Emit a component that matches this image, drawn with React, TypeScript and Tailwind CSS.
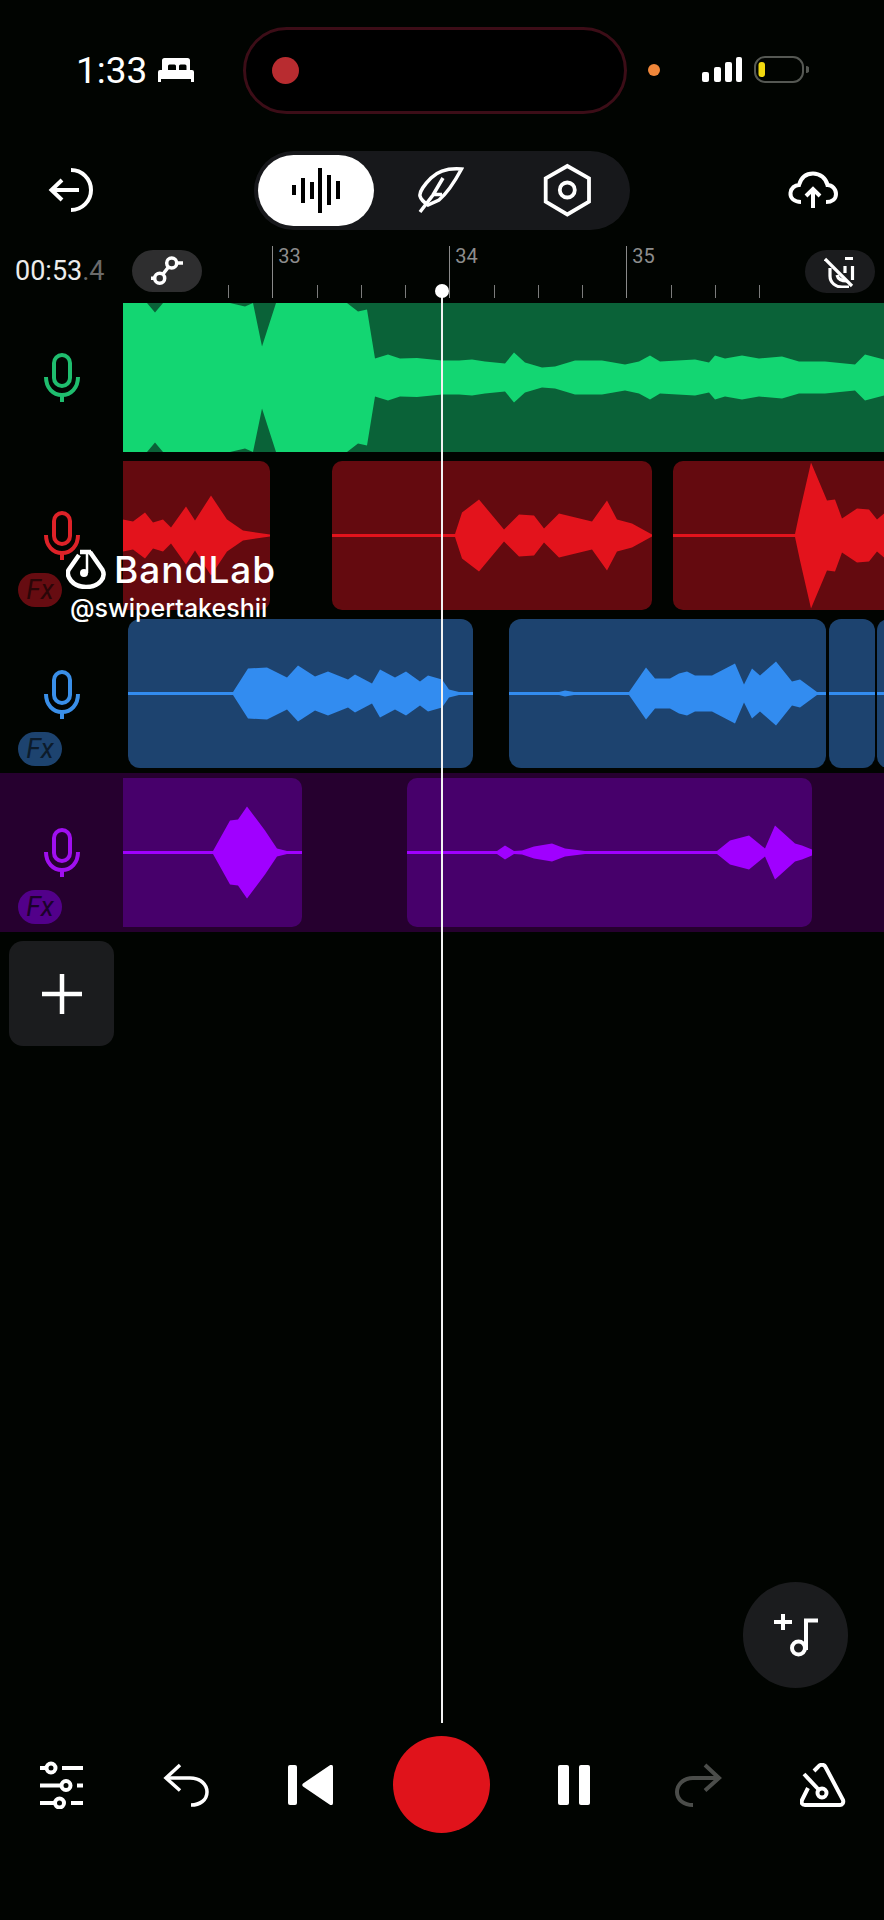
import React from 'react';

type Env = [number, number][];

// envelope points are [page x, half height], mirrored around the clip's middle
const Wave = ({ env, x0, w, fill }: { env: Env; x0: number; w: number; fill: string }) => {
    const top = env.map(([x, h]) => `${x},${74.5 - h}`);
    const bottom = [...env].reverse().map(([x, h]) => `${x},${74.5 + h}`);
    return (
        <svg className="block h-[149px] shrink-0" width={w} viewBox={`${x0} 0 ${w} 149`}>
            <polygon points={[...top, ...bottom].join(' ')} fill={fill} />
        </svg>
    );
};

const Mic = ({ color }: { color: string }) => (
    <svg className="block w-[36px] h-[49px]" viewBox="0 0 36 49" fill="none" stroke={color} strokeWidth="4">
        <rect x="10" y="2" width="16" height="31" rx="8" />
        <path d="M2 24C2 35 9 42 18 42C27 42 34 35 34 24" />
        <path d="M18 42V49" />
    </svg>
);

const Fx = ({ bg, fg }: { bg: string; fg: string }) => (
    <div className={`w-[44px] h-[34px] -ml-[26px] mt-[13px] rounded-full flex items-center justify-center italic text-[27px] leading-none font-['Roboto',sans-serif] ${bg} ${fg}`}>
        Fx
    </div>
);

const greenEnv: Env = [[123, 74.5], [147, 74.5], [155, 65], [163, 74.5], [230, 74.5], [245, 71], [253, 74.5], [262, 31], [276, 74.5], [347, 74.5], [358, 66], [367, 68], [375, 19], [388, 23], [400, 19], [417, 19.5], [442, 17], [459, 17], [472, 18], [485, 16], [505, 14], [514, 25], [525, 15], [542, 10], [555, 11], [575, 17], [602, 17], [625, 13], [639, 16], [650, 22], [660, 16], [695, 18], [709, 15], [715, 22], [725, 19], [742, 22], [759, 19], [782, 21], [799, 16], [825, 16], [855, 13], [865, 23], [884, 18]];
const red1: Env = [[123, 16], [133, 14], [145, 23], [153, 13], [163, 16], [171, 8], [186, 29], [195, 15], [211, 40], [227, 16], [243, 5], [270, 1]];
const red2: Env = [[332, 1.5], [455, 1.5], [462, 23], [479, 36], [504, 6], [519, 21], [534, 20], [544, 7], [559, 22], [592, 14], [607, 35], [617, 16], [632, 12], [652, 1]];
const red3: Env = [[673, 1.5], [795, 1.5], [800, 25], [811, 73], [827, 35], [835, 36], [842, 17], [857, 27], [869, 26], [877, 16], [884, 22]];
const blue1: Env = [[128, 1.5], [233, 1.5], [248, 25], [267, 26], [287, 16], [298, 28], [315, 17], [328, 22], [348, 14], [355, 19], [372, 10], [380, 24], [395, 16], [406, 22], [420, 12], [428, 18], [442, 14], [449, 4], [459, 1.5], [473, 1.5]];
const blue2: Env = [[509, 1.5], [559, 1.5], [565, 3], [574, 1.5], [629, 1.5], [646, 26], [655, 15], [670, 15], [679, 20], [687, 22], [695, 18], [712, 18], [735, 30], [744, 9], [752, 25], [760, 18], [776, 32], [792, 12], [800, 14], [817, 1.5], [826, 1.5]];
const blue3: Env = [[829, 1.5], [875, 1.5]];
const blue4: Env = [[877, 1.5], [900, 1.5]];
const purple1: Env = [[123, 1.5], [213, 1.5], [230, 32], [238, 33], [247, 46], [265, 22], [277, 4], [287, 1.5], [302, 1.5]];
const purple2: Env = [[407, 1.5], [497, 1.5], [505, 7], [514, 1.5], [522, 2], [534, 6], [552, 9], [565, 4], [585, 1.5], [717, 1.5], [730, 12], [749, 17], [765, 4], [775, 27], [795, 9], [802, 7], [812, 3]];

const Tick = ({ label }: { label?: string }) =>
    label ? (
        <div className="w-[44.25px] h-[52px] shrink-0 border-l border-[#8a8a8a] pl-[5px] text-[20px] leading-[20px] text-[#8d8d8d] font-['Roboto',sans-serif]">
            {label}
        </div>
    ) : (
        <div className="w-[44.25px] h-[13px] shrink-0 border-l border-[#7c7c7c]" />
    );

export default function App() {
    return (
        <div className="relative w-[884px] h-[1920px] overflow-hidden bg-[#010401] flex flex-col font-['Roboto',sans-serif] text-white">
            {/* status bar */}
            <div className="h-[140px] shrink-0 flex items-center">
                <span className="ml-[76px] w-[72px] text-[37px] leading-none font-['Roboto',sans-serif]">1:33</span>
                <svg className="ml-[10px] w-[36px] h-[24px]" viewBox="158 60 36 24" fill="#fff">
                    <path d="M162 62.5a2.5 2.5 0 0 1 2.5-2.500h23a2.5 2.5 0 0 1 2.5 2.500V72h-3.500v-4a1.500 1.500 0 0 0-1.500-1.500h-4.500a1.500 1.500 0 0 0-1.500 1.500V72h-3v-4a1.500 1.500 0 0 0-1.500-1.500h-5a1.500 1.500 0 0 0-1.500 1.500V72H162z" />
                    <path d="M158 74a2 2 0 0 1 2-2h32a2 2 0 0 1 2 2v10h-3v-3h-30v3h-3z" />
                </svg>
                <div className="ml-[49px] w-[384px] h-[87px] rounded-full border-[3px] border-[#3c0d17] bg-black flex items-center pl-[26px]">
                    <div className="w-[27px] h-[27px] rounded-full bg-[#b82c30]" />
                </div>
                <div className="ml-[21px] w-[12px] h-[12px] rounded-full bg-[#f0873a]" />
                <svg className="ml-[42px] w-[40px] h-[26px]" viewBox="702 58 40 26" fill="#fff">
                    <rect x="702" y="73" width="7" height="10" rx="2" />
                    <rect x="714" y="68" width="7" height="15" rx="2" />
                    <rect x="725" y="63" width="7" height="20" rx="2" />
                    <rect x="736" y="58" width="6" height="25" rx="2" />
                </svg>
                <svg className="ml-[11px] w-[56px] h-[30px]" viewBox="753 56 56 30" fill="none">
                    <rect x="755" y="58" width="48" height="25" rx="10" stroke="#555853" strokeWidth="2" />
                    <rect x="758.5" y="63" width="6.5" height="15" rx="3" fill="#f2d90f" />
                    <path d="M806 67a3.5 3.5 0 0 1 0 7z" fill="#555853" />
                </svg>
            </div>

            {/* toolbar */}
            <div className="h-[100px] shrink-0 flex items-center">
                <svg className="ml-[48px] w-[47px] h-[48px]" viewBox="48 166 47 48" fill="none" stroke="#fff" strokeWidth="4">
                    <path d="M79 190H52M62 180L51.500 190L62 200" />
                    <path d="M71 170A20 20 0 0 1 71 210" />
                </svg>
                <div className="ml-[159px] w-[376px] h-[79px] rounded-full bg-[#17181b] flex items-center pl-[4px]">
                    <div className="w-[116px] h-[71px] rounded-full bg-white flex items-center justify-center">
                        <svg className="w-[48px] h-[48px]" viewBox="292 166 48 48" fill="#000">
                            <rect x="292" y="185" width="4" height="10" />
                            <rect x="301" y="178" width="4" height="25" />
                            <rect x="310" y="182" width="4" height="17" />
                            <rect x="318" y="168" width="4" height="45" />
                            <rect x="327" y="175" width="4" height="30" />
                            <rect x="336" y="181" width="4" height="18" />
                        </svg>
                    </div>
                    <svg className="ml-[44px] w-[46px] h-[48px]" viewBox="420 166 46 48" fill="none" stroke="#fff" strokeWidth="3.500">
                        <path d="M463.500 169C451 168 440 171 433 178C427 184 421 192 422 196C423 200 427 203 430 205L441 200C448 194 456 183 463.500 169Z" />
                        <path d="M445 178L435 195L422 212M435 194.500H444" />
                    </svg>
                    <svg className="ml-[78px] w-[50px] h-[54px]" viewBox="543 163 50 54" fill="none" stroke="#fff" strokeWidth="3.800">
                        <path d="M568.300 166L590 178.300V201.700L568.300 214.500L546.700 201.700V178.300Z" />
                        <circle cx="568.300" cy="190" r="7.500" />
                    </svg>
                </div>
                <svg className="ml-[158px] w-[50px] h-[40px]" viewBox="788 169 50 40" fill="none" stroke="#fff" strokeWidth="4">
                    <path d="M801 201C794 201 790 197 790.500 192C791 187 795 184 799 184C801 177 806 172.500 813 172.500C820 172.500 826 177 827.500 184C832 184 836 188 836 193C836 198 832 201 826 201" />
                    <path d="M813 207V188M806 195L813 188L820 195" />
                </svg>
            </div>

            {/* timeline */}
            <div className="h-[63px] shrink-0 flex">
                <div className="w-[132px] shrink-0 pl-[15px] pt-[17px] text-[27px] leading-[28px] text-[#ececec]">
                    00:53<span className="text-[#6a6a6a]">.4</span>
                </div>
                <div className="mt-[10px] w-[70px] h-[42px] shrink-0 rounded-full bg-[#2e2e2f] flex items-center justify-center">
                    <svg className="w-[36px] h-[30px]" viewBox="150 257 36 30" fill="none" stroke="#fff" strokeWidth="3.500">
                        <circle cx="172.700" cy="264" r="5" />
                        <circle cx="160.700" cy="279.300" r="5" />
                        <path d="M169.500 268L164 275M178 264H184M152 279.300H156" />
                    </svg>
                </div>
                <div className="ml-[26px] self-end mb-[5px] flex items-end">
                    <Tick />
                    <Tick label="33" />
                    <Tick />
                    <Tick />
                    <Tick />
                    <Tick label="34" />
                    <Tick />
                    <Tick />
                    <Tick />
                    <Tick label="35" />
                    <Tick />
                    <Tick />
                    <Tick />
                </div>
                <div className="mt-[10px] ml-[2px] w-[70px] h-[43px] shrink-0 rounded-full bg-[#1b1c1e] flex items-center justify-center">
                    <svg className="w-[32px] h-[32px]" viewBox="824 256 32 32" fill="none" stroke="#fff" strokeWidth="3.200">
                        <path d="M825 259L852 286" />
                        <path d="M830 268V276C830 283 836 287 842 287H849" />
                        <path d="M837 275C838 279 842 281 847 281" />
                        <path d="M852.500 266V280M845 266V273M845 258.500H853" />
                    </svg>
                </div>
            </div>

            {/* green track */}
            <div className="h-[149px] shrink-0 flex overflow-hidden">
                <div className="w-[123px] shrink-0 pt-[50px] pl-[44px]">
                    <Mic color="#1fbd6e" />
                </div>
                <div className="w-[761px] shrink-0 bg-[#0a6238]">
                    <Wave env={greenEnv} x0={123} w={761} fill="#13d672" />
                </div>
            </div>

            {/* red track */}
            <div className="mt-[9px] h-[149px] shrink-0 flex overflow-hidden">
                <div className="w-[123px] shrink-0 pt-[50px] pl-[44px]">
                    <Mic color="#dd2228" />
                    <Fx bg="bg-[#660c11]" fg="text-[#2a0608]" />
                </div>
                <div className="w-[147px] shrink-0 rounded-r-[10px] overflow-hidden bg-[#640a0f]">
                    <Wave env={red1} x0={123} w={147} fill="#e3131c" />
                </div>
                <div className="ml-[62px] w-[320px] shrink-0 rounded-[10px] overflow-hidden bg-[#640a0f]">
                    <Wave env={red2} x0={332} w={320} fill="#e3131c" />
                </div>
                <div className="ml-[21px] w-[230px] shrink-0 rounded-[10px] overflow-hidden bg-[#640a0f]">
                    <Wave env={red3} x0={673} w={230} fill="#e3131c" />
                </div>
            </div>

            {/* blue track */}
            <div className="mt-[9px] h-[149px] shrink-0 flex overflow-hidden">
                <div className="w-[128px] shrink-0 pt-[51px] pl-[44px]">
                    <Mic color="#3a8fe8" />
                    <Fx bg="bg-[#1d436f]" fg="text-[#0c1b2b]" />
                </div>
                <div className="w-[345px] shrink-0 rounded-[12px] overflow-hidden bg-[#1d436f]">
                    <Wave env={blue1} x0={128} w={345} fill="#328cf0" />
                </div>
                <div className="ml-[36px] w-[317px] shrink-0 rounded-[12px] overflow-hidden bg-[#1d436f]">
                    <Wave env={blue2} x0={509} w={317} fill="#328cf0" />
                </div>
                <div className="ml-[3px] w-[46px] shrink-0 rounded-[12px] overflow-hidden bg-[#1d436f]">
                    <Wave env={blue3} x0={829} w={46} fill="#328cf0" />
                </div>
                <div className="ml-[2px] w-[23px] shrink-0 rounded-[12px] overflow-hidden bg-[#1d436f]">
                    <Wave env={blue4} x0={877} w={23} fill="#328cf0" />
                </div>
            </div>

            {/* purple track, selected */}
            <div className="mt-[5px] h-[159px] shrink-0 py-[5px] flex overflow-hidden bg-[#26002f]">
                <div className="w-[123px] shrink-0 pt-[50px] pl-[44px]">
                    <Mic color="#a00ff0" />
                    <Fx bg="bg-[#52008a]" fg="text-[#1c022b]" />
                </div>
                <div className="w-[179px] shrink-0 rounded-r-[10px] overflow-hidden bg-[#47006b]">
                    <Wave env={purple1} x0={123} w={179} fill="#a000ff" />
                </div>
                <div className="ml-[105px] w-[405px] shrink-0 rounded-[10px] overflow-hidden bg-[#47006b]">
                    <Wave env={purple2} x0={407} w={405} fill="#a000ff" />
                </div>
            </div>

            {/* add track */}
            <div className="mt-[9px] ml-[9px] w-[105px] h-[105px] shrink-0 rounded-[14px] bg-[#1b1c1e] flex items-center justify-center">
                <svg className="w-[40px] h-[40px]" viewBox="0 0 40 40" stroke="#fff" strokeWidth="4.500">
                    <path d="M20 0V40M0 20H40" />
                </svg>
            </div>

            {/* add loop */}
            <div className="mt-[536px] ml-auto mr-[36px] w-[105px] h-[106px] shrink-0 rounded-full bg-[#1b1c1e] flex items-center justify-center">
                <svg className="w-[48px] h-[46px]" viewBox="772 1613 48 46" fill="none" stroke="#fff" strokeWidth="4">
                    <path d="M774 1623H792M783 1615V1631" />
                    <circle cx="798.500" cy="1649" r="6.500" />
                    <path d="M806 1651V1621.500H818" />
                </svg>
            </div>

            {/* transport */}
            <div className="mt-[48px] h-[97px] shrink-0 flex items-center">
                <svg className="ml-[38px] w-[47px] h-[48px]" viewBox="38 1760 47 48" fill="none" stroke="#fff">
                    <g strokeWidth="4">
                        <path d="M40 1767H47M62 1767H83M40 1784.500H62M77 1784.500H83M40 1802H55M71 1802H83" />
                    </g>
                    <g strokeWidth="4">
                        <circle cx="51" cy="1767" r="4.500" />
                        <circle cx="66" cy="1784.500" r="4.500" />
                        <circle cx="59.500" cy="1802" r="4.500" />
                    </g>
                </svg>
                <svg className="ml-[78px] w-[46px] h-[44px]" viewBox="163 1763 46 44" fill="none" stroke="#fff" strokeWidth="3.500">
                    <path d="M180 1765L166 1778L180 1790.500" />
                    <path d="M166 1778H190C201 1778 207 1785 207 1792C207 1800 200 1805 191 1805" />
                </svg>
                <svg className="ml-[79px] w-[45px] h-[40px]" viewBox="288 1765 45 40" fill="#fff">
                    <rect x="288" y="1765" width="9" height="40" rx="2" />
                    <path d="M329.500 1765.500C331.500 1764 333 1765 333 1767V1803C333 1805 331.500 1806 329.500 1804.500L303 1786.500C302 1785.500 302 1784.500 303 1783.500Z" />
                </svg>
                <div className="ml-[60px] w-[97px] h-[97px] shrink-0 rounded-full bg-[#e0131b]" />
                <div className="ml-[68px] flex gap-[10px]">
                    <div className="w-[11px] h-[40px] rounded-[2px] bg-white" />
                    <div className="w-[11px] h-[40px] rounded-[2px] bg-white" />
                </div>
                <svg className="ml-[85px] w-[47px] h-[44px]" viewBox="675 1763 47 44" fill="none" stroke="#4b4d4a" strokeWidth="4">
                    <path d="M705 1765L719 1778L705 1790.500" />
                    <path d="M719 1778H693C683 1778 677 1785 677 1792C677 1800 684 1805 693 1805" />
                </svg>
                <svg className="ml-[78px] w-[46px] h-[44px]" viewBox="800 1763 46 44" fill="none" stroke="#fff" strokeWidth="4">
                    <path d="M814 1771L818 1767C820 1764 824 1764 825.500 1767L843 1800C844 1803 842 1805 840 1805H805C802 1805 801 1803 802 1800L808 1788" />
                    <path d="M804 1774L819 1790" />
                    <circle cx="822" cy="1793" r="4.500" />
                </svg>
            </div>

            {/* playhead over the tracks */}
            <div className="absolute left-[441px] top-[291px] w-[2px] h-[1432px] bg-[#f2f2f2]" />
            <div className="absolute left-[435px] top-[284px] w-[14px] h-[14px] rounded-full bg-white" />

            {/* watermark */}
            <div className="absolute left-[66px] top-[549px] font-['Inter',sans-serif]">
                <div className="flex items-center">
                    <svg className="w-[40px] h-[40px]" viewBox="0 0 40 40" fill="none" stroke="#fff" strokeWidth="4.500">
                        <path d="M13 6L2.500 21C0 27 6 38 20 38C34 38 40 28 36.500 21L24 3" />
                        <path d="M14 3H25" />
                        <path d="M21 4V24" strokeWidth="2.500" />
                        <circle cx="18" cy="24" r="4" fill="#fff" stroke="none" />
                    </svg>
                    <span className="ml-[8px] text-[37px] leading-none font-medium tracking-[1px]">BandLab</span>
                </div>
                <div className="ml-[4px] mt-[5px] text-[25px] leading-[28px] font-medium">@swipertakeshii</div>
            </div>
        </div>
    );
}
